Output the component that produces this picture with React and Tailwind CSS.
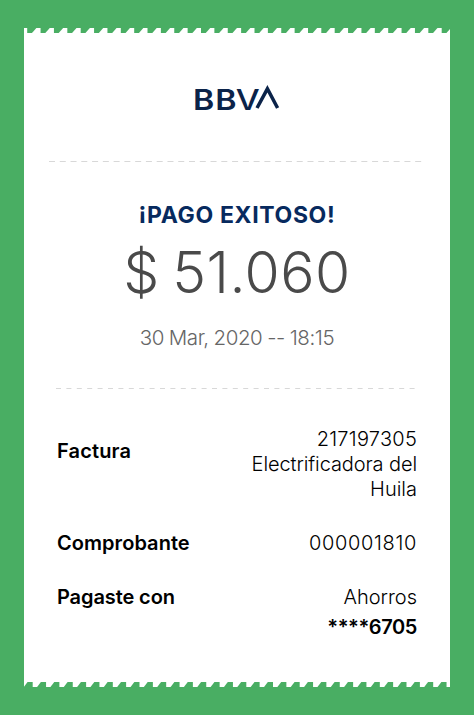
const TEETH = Array.from({ length: 33 }, (_, i) => i);

function TopEdge() {
  return (
    <svg className="block h-[5px] w-full" viewBox="0 0 426 5" fill="#fff">
      {TEETH.map((i) => {
        const x = 3.2 + i * 13.37;
        return <polygon key={i} points={`${x - 8.6},5 ${x - 4.2},0 ${x},0 ${x},5`} />;
      })}
    </svg>
  );
}

function BottomEdge() {
  return (
    <svg className="block h-[5px] w-full" viewBox="0 0 426 5" fill="#fff">
      {TEETH.map((i) => {
        const x = 8.7 + (i - 1) * 13.35;
        return <polygon key={i} points={`${x},0 ${x + 8.2},0 ${x + 4.4},5 ${x},5`} />;
      })}
    </svg>
  );
}

function Divider({ period, dash, className }) {
  return (
    <svg className={`block h-px ${className}`}>
      <line x1="0" y1="0.5" x2="100%" y2="0.5" stroke="#d8d8d8" strokeDasharray={`${dash} ${period - dash}`} />
    </svg>
  );
}

function Logo() {
  return (
    <svg className="mx-auto block h-[38px] w-[94px]" viewBox="190 80 94 38" fill="#0b2349" aria-label="BBVA">
      <g fontFamily="Inter" fontSize="28.5" fontWeight="600">
        <text x="193" y="110.3" textLength="21.3" lengthAdjust="spacingAndGlyphs">B</text>
        <text x="215.2" y="110.3" textLength="21.3" lengthAdjust="spacingAndGlyphs">B</text>
        <text x="235.8" y="110.3" fontWeight="500" textLength="24" lengthAdjust="spacingAndGlyphs">V</text>
      </g>
      <polyline points="257,108 267.4,88.8 277.6,108" fill="none" stroke="#0b2349" strokeWidth="3.5" />
    </svg>
  );
}

export default function App() {
  return (
    <main className="h-[715px] w-[474px] bg-[#49ae63] pt-7 pl-6 font-['Inter',sans-serif]">
      <div className="w-[426px]">
        <TopEdge />
        <section className="flex h-[649px] flex-col bg-white pt-[47px] text-black">
          <Logo />
          <Divider period={10.77} dash={6} className="mt-[43px] ml-[25px] w-[375px]" />

          <div className="flex flex-col items-center whitespace-nowrap">
            <h1 className="mt-[38px] text-[23px] leading-[30px] font-bold tracking-[0.65px] text-[#072a5e] [font-feature-settings:'case']">¡PAGO EXITOSO!</h1>
            <p className="mt-2 text-[57px] leading-[70px] font-light tracking-[0.5px] text-[#4a4a4a] [word-spacing:-4px]">$ 51.060</p>
            <p className="mt-[15px] text-[20.5px] leading-[30px] font-light tracking-[-0.4px] text-[#666] [word-spacing:-0.6px]">30 Mar, 2020 -- 18:15</p>
          </div>

          <Divider period={10.4} dash={5} className="mt-[35px] ml-8 w-[361px]" />

          <dl className="mt-[38px] pr-[33px] pl-[33px] text-[20px] leading-[25px] whitespace-nowrap">
            <div className="flex justify-between">
              <dt className="mt-[12px] font-semibold tracking-[0.15px]">Factura</dt>
              <dd className="text-right font-light">
                <span className="tracking-[0.25px]">217197305</span>
                <br />
                <span className="tracking-[-0.1px]">Electrificadora del</span>
                <br />
                Huila
              </dd>
            </div>
            <div className="mt-[29px] flex justify-between">
              <dt className="font-semibold tracking-[0.05px]">Comprobante</dt>
              <dd className="font-light tracking-[0.65px]">000001810</dd>
            </div>
            <div className="mt-[29px] flex justify-between">
              <dt className="font-semibold tracking-[-0.1px]">Pagaste con</dt>
              <dd className="text-right font-light">
                Ahorros
                <strong className="mt-[5px] block font-semibold tracking-[-0.4px]">****6705</strong>
              </dd>
            </div>
          </dl>
        </section>
        <BottomEdge />
      </div>
    </main>
  );
}
